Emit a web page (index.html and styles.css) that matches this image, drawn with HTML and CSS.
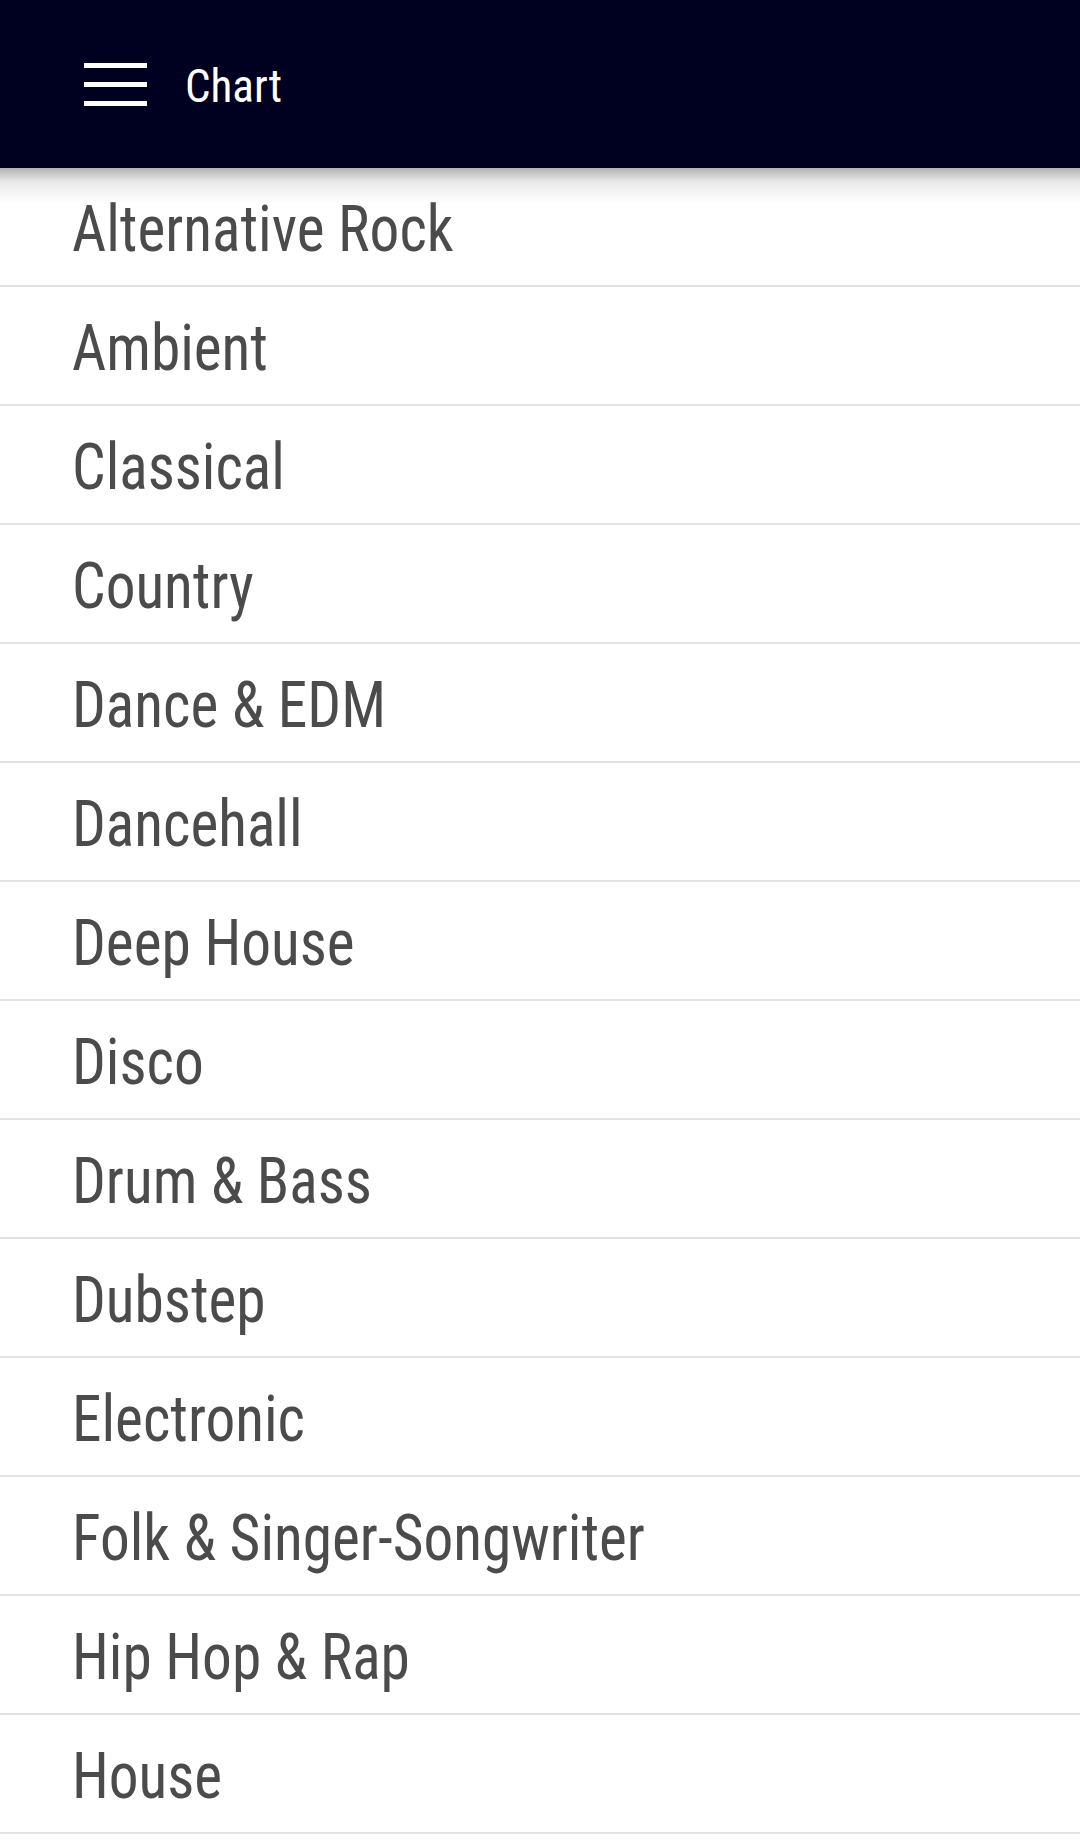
FILE: index.html
```html
<!DOCTYPE html>
<html>
<head>
<meta charset="utf-8">
<link rel="stylesheet" href="styles.css">
</head>
<body>
<header class="appbar">
  <svg class="menu-icon" width="63" height="43" viewBox="0 0 63 43">
    <rect x="0" y="0" width="63" height="5" fill="#ffffff"/>
    <rect x="0" y="19" width="63" height="5" fill="#ffffff"/>
    <rect x="0" y="38" width="63" height="5" fill="#ffffff"/>
  </svg>
  <span class="title">Chart</span>
</header>
<ul class="list">
  <li class="item"><span class="label">Alternative Rock</span></li>
  <li class="item"><span class="label">Ambient</span></li>
  <li class="item"><span class="label">Classical</span></li>
  <li class="item"><span class="label">Country</span></li>
  <li class="item"><span class="label">Dance &amp; EDM</span></li>
  <li class="item"><span class="label">Dancehall</span></li>
  <li class="item"><span class="label">Deep House</span></li>
  <li class="item"><span class="label">Disco</span></li>
  <li class="item"><span class="label">Drum &amp; Bass</span></li>
  <li class="item"><span class="label">Dubstep</span></li>
  <li class="item"><span class="label">Electronic</span></li>
  <li class="item"><span class="label">Folk &amp; Singer-Songwriter</span></li>
  <li class="item"><span class="label">Hip Hop &amp; Rap</span></li>
  <li class="item"><span class="label">House</span></li>
</ul>
<div class="shadow"></div>
</body>
</html>
```
FILE: styles.css
```css
html, body {
  margin: 0;
  padding: 0;
  background: #ffffff;
}
body {
  font-family: "Roboto Condensed", Roboto, "Liberation Sans", sans-serif;
  font-stretch: condensed;
  overflow: hidden;
  height: 1845px;
  position: relative;
}
.appbar {
  height: 168px;
  background: #000020;
  display: flex;
  align-items: center;
  box-sizing: border-box;
  padding-left: 84px;
}
.menu-icon {
  display: block;
  flex: none;
}
.title {
  color: #ffffff;
  font-size: 46px;
  margin-left: 38px;
  line-height: 1;
  padding-top: 3px;
  display: inline-block;
  transform: scaleX(0.98);
  transform-origin: left center;
}
.list {
  list-style: none;
  margin: 0;
  padding: 0;
}
.item {
  height: 111px;
  padding-top: 6px;
  border-bottom: 2px solid #e3e3e3;
  color: #4b4b4b;
  font-size: 65px;
  line-height: 111px;
  padding-left: 72px;
  white-space: nowrap;
}
.label {
  display: inline-block;
  transform: scaleX(0.913);
  transform-origin: left center;
}
.shadow {
  position: absolute;
  left: 0;
  right: 0;
  top: 168px;
  height: 36px;
  background: linear-gradient(to bottom, rgba(0,0,0,0.3), rgba(0,0,0,0.08) 40%, rgba(0,0,0,0));
  pointer-events: none;
}
```
